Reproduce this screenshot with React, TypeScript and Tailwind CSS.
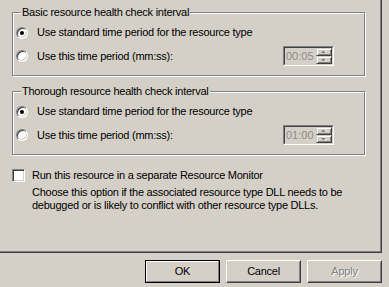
import type { ReactNode } from "react";

function Radio({ checked }: { checked?: boolean }) {
  return (
    <span className="flex h-3 w-3 shrink-0 items-center justify-center rounded-full border border-t-[#808080] border-l-[#808080] border-b-white border-r-white bg-white shadow-[inset_1px_1px_0_#404040,inset_-1px_-1px_0_#d4d0c8]">
      {checked && <span className="h-1 w-1 rounded-full bg-black" />}
    </span>
  );
}

function Arrow({ up }: { up?: boolean }) {
  return (
    <svg width="6" height="4" viewBox="0 0 6 4" className="block">
      {up ? (
        <>
          <path d="M1 3h5L3.5 0.5z" fill="#fff" />
          <path d="M0 3h5L2.5 0.5z" fill="#808080" />
        </>
      ) : (
        <>
          <path d="M1 1h5L3.5 3.5z" fill="#fff" />
          <path d="M0 1h5L2.5 3.5z" fill="#808080" />
        </>
      )}
    </svg>
  );
}

function SpinButton({ up }: { up?: boolean }) {
  return (
    <div className="flex h-2 w-[16px] items-center justify-center border border-t-[#d4d0c8] border-l-[#d4d0c8] border-b-[#404040] border-r-[#404040] shadow-[inset_1px_1px_0_#fff,inset_-1px_-1px_0_#808080]">
      <Arrow up={up} />
    </div>
  );
}

function Spinner({ value }: { value: string }) {
  return (
    <div className="h-5 w-[51px] border border-t-[#808080] border-l-[#808080] border-b-white border-r-white">
      <div className="flex h-full w-full border border-t-[#404040] border-l-[#404040] border-b-[#d4d0c8] border-r-[#d4d0c8]">
        <span className="flex-1 pl-px text-[11px] leading-[16px] tracking-normal text-[#8c8c8c]">{value}</span>
        <div className="flex flex-col">
          <SpinButton up />
          <SpinButton />
        </div>
      </div>
    </div>
  );
}

function Group({ title, value, className = "" }: { title: string; value: string; className?: string }) {
  return (
    <div className={`relative h-16 w-[353px] border border-[#808080] pl-[3px] pt-[13px] shadow-[inset_1px_1px_0_#fff,1px_1px_0_#fff] ${className}`}>
      <span className="absolute -top-[7px] left-[8px] bg-[#d4d0c8] px-px leading-[13px]">{title}</span>
      <label className="flex h-[13px] items-center gap-[9px]">
        <Radio checked />
        <span>Use standard time period for the resource type</span>
      </label>
      <div className="mt-[7px] flex h-5 items-center pr-[30px]">
        <Radio />
        <span className="ml-[9px]">Use this time period (mm:ss):</span>
        <div className="ml-auto">
          <Spinner value={value} />
        </div>
      </div>
    </div>
  );
}

function Button({ children, primary, disabled }: { children: ReactNode; primary?: boolean; disabled?: boolean }) {
  if (primary) {
    return (
      <div className="h-[23px] w-[75px] border border-black">
        <div className="flex h-full w-full items-center justify-center border border-t-white border-l-white border-b-[#808080] border-r-[#808080]">
          {children}
        </div>
      </div>
    );
  }
  return (
    <div className="h-[23px] w-[75px] border border-t-white border-l-white border-b-[#404040] border-r-[#404040]">
      <div
        className={`flex h-full w-full items-center justify-center border border-t-[#d4d0c8] border-l-[#d4d0c8] border-b-[#808080] border-r-[#808080] ${
          disabled ? "text-[#808080] [text-shadow:1px_1px_0_#fff]" : ""
        }`}
      >
        {children}
      </div>
    </div>
  );
}

export default function App() {
  return (
    <div className="h-[287px] w-[389px] overflow-hidden bg-[#d4d0c8] font-['Liberation_Sans',Arial,sans-serif] text-[11px] leading-[13px] tracking-[-0.25px] text-black">
      {/* Tab page */}
      <div className="h-[253px] w-[382px] border-b border-r border-[#404040] pl-[12px] pt-[12px] shadow-[inset_-1px_-1px_0_#808080]">
        <Group title="Basic resource health check interval" value="00:05" />
        <Group title="Thorough resource health check interval" value="01:00" className="mt-[15px]" />

        <div className="mt-[13px] flex gap-[7px]">
          <span className="mt-px h-[13px] w-[13px] shrink-0 border border-t-[#808080] border-l-[#808080] border-b-white border-r-white bg-white shadow-[inset_1px_1px_0_#404040,inset_-1px_-1px_0_#d4d0c8]" />
          <div>
            <div className="leading-[14px]">Run this resource in a separate Resource Monitor</div>
            <p className="mt-[4px]">
              Choose this option if the associated resource type DLL needs to be
              <br />
              debugged or is likely to conflict with other resource type DLLs.
            </p>
          </div>
        </div>
      </div>

      {/* Dialog buttons */}
      <div className="mt-[7px] flex w-[382px] justify-end gap-[6px]">
        <Button primary>OK</Button>
        <Button>Cancel</Button>
        <Button disabled>Apply</Button>
      </div>
    </div>
  );
}
